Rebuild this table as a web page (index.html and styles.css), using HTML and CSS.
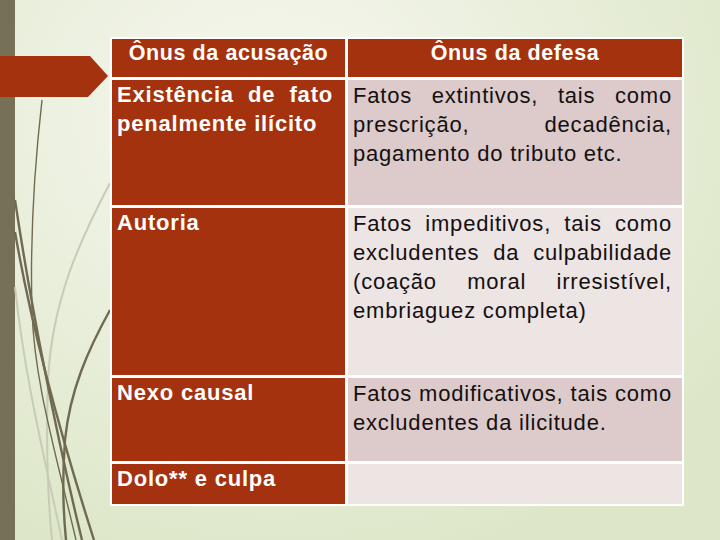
FILE: index.html
```html
<!DOCTYPE html>
<html lang="pt">
<head>
<meta charset="utf-8">
<title>Ônus da prova</title>
<link rel="stylesheet" href="styles.css">
</head>
<body>
<div class="slide">
  <div class="strip"></div>
  <svg class="swirls" viewBox="0 0 120 540" width="120" height="540" aria-hidden="true">
    <path class="light" d="M110,183 C80,240 52,300 48,380 C46,440 48,500 52,540"/>
    <path class="light" d="M15,287 C25,380 45,460 62,540"/>
    <path class="dark thin" d="M42,100 C34,170 30,240 32,310 C34,380 55,450 76,540"/>
    <path class="dark" d="M15,200 C30,300 55,430 82,540"/>
    <path class="dark" d="M15,232 C32,330 62,440 94,540"/>
    <path class="dark" d="M110,310 C88,350 70,390 65,440 C62,480 63,510 66,540"/>
  </svg>
  <div class="arrow"></div>
  <div class="table">
    <div class="cell head">Ônus da acusação</div>
    <div class="cell head">Ônus da defesa</div>
    <div class="cell left">Existência de fato penalmente ilícito</div>
    <div class="cell right shade">Fatos extintivos, tais como prescrição, decadência, pagamento do tributo etc.</div>
    <div class="cell left">Autoria</div>
    <div class="cell right pale">Fatos impeditivos, tais como excludentes da culpabilidade (coação moral irresistível, embriaguez completa)</div>
    <div class="cell left">Nexo causal</div>
    <div class="cell right shade">Fatos modificativos, tais como excludentes da ilicitude.</div>
    <div class="cell left">Dolo** e culpa</div>
    <div class="cell right pale"></div>
  </div>
</div>
</body>
</html>
```
FILE: styles.css
```css
html, body {
  margin: 0;
  padding: 0;
}
body {
  width: 720px;
  height: 540px;
  overflow: hidden;
  font-family: "Liberation Sans", Arial, sans-serif;
}
.slide {
  position: relative;
  width: 720px;
  height: 540px;
  box-sizing: border-box;
  padding: 37px 0 0 110px;
  background: radial-gradient(ellipse 75% 85% at 38% 22%, #f6f7ef 0%, #edf1e1 40%, #dde7c8 100%);
}
.strip {
  position: absolute;
  left: 0;
  top: 0;
  width: 15px;
  height: 540px;
  background: #767056;
}
.swirls {
  position: absolute;
  left: 0;
  top: 0;
}
.swirls path {
  fill: none;
}
.swirls .dark {
  stroke: #6f6a50;
  stroke-width: 2.4;
}
.swirls .dark.thin {
  stroke-width: 1.4;
}
.swirls .light {
  stroke: #c8ccb4;
  stroke-width: 2;
}
.arrow {
  position: absolute;
  left: 0;
  top: 56px;
  width: 108px;
  height: 41px;
  background: #a5320f;
  clip-path: polygon(0 0, 90px 0, 108px 20px, 88px 41px, 0 41px);
}
.table {
  position: relative;
  display: grid;
  grid-template-columns: 233px 334px;
  grid-template-rows: 38px 125px 167px 83px 40px;
  gap: 3px;
  width: 574px;
  box-sizing: border-box;
  padding: 2px;
  background: #ffffff;
}
.cell {
  box-sizing: border-box;
  font-size: 22px;
  line-height: 29px;
  letter-spacing: 0.8px;
  text-align: justify;
  padding: 0 12px 0 5px;
}
.head {
  background: #a5320f;
  color: #ffffff;
  font-weight: bold;
  font-size: 21.5px;
  letter-spacing: 0.6px;
  text-align: center;
  padding: 0;
}
.left {
  background: #a5320f;
  color: #ffffff;
  font-weight: bold;
}
.right {
  color: #141010;
  padding: 1px 10px 0 5px;
}
.shade {
  background: #ddcaca;
}
.pale {
  background: #ede4e4;
}
```
